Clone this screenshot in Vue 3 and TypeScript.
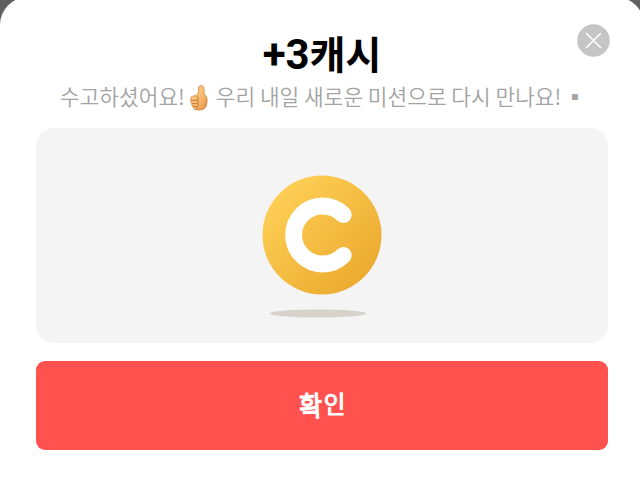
<template>
  <div class="screen">
    <section v-if="open" class="sheet">
      <button class="close" type="button" aria-label="닫기" @click="close">
        <svg viewBox="0 0 33 33">
          <circle cx="16.5" cy="16.5" r="16.3" fill="#c5c5c5" />
          <path d="M9.5 9.5 23.5 23.5M23.5 9.5 9.5 23.5" stroke="#fff" stroke-width="1.5" stroke-linecap="round" />
        </svg>
      </button>

      <h1 class="title"><span class="amount">+{{ reward }}</span>캐시</h1>

      <p class="message">
        <span>수고하셨어요!</span>
        <svg class="thumb" viewBox="0 0 18 26">
          <defs>
            <linearGradient id="skin" x1="0" y1="0" x2="1" y2="1">
              <stop offset="0" stop-color="#ffd590" />
              <stop offset=".6" stop-color="#f8b86b" />
              <stop offset="1" stop-color="#d98a43" />
            </linearGradient>
          </defs>
          <path
            d="M9.200 1.200C10.500.2 13.200.4 13.800 2.400c.6 2.200.1 4.800.5 7.200 1.900 1.100 2.800 2.800 2.800 5.300 0 3.500-.4 6.700-2.600 8.600-2.300 1.900-6.900 1.900-9.400.9-1.600-.6-2.300-1.700-2-3.100-1.200-.6-1.700-1.700-1.300-3C.7 17.500.3 16.200.9 15 .3 13.500.9 11.700 2.500 11.200c1.800-.6 3.500-.5 4.900-1.500C8.700 7.700 8.500 4.900 8.700 2.600c0-.6.100-1.100.5-1.400z"
            fill="url(#skin)"
            stroke="#c77d38"
            stroke-width=".7"
          />
          <path
            d="M1.300 15.100c2 .5 4 .3 6.200 0M2 18.300c1.900.5 3.700.4 5.500 0M3.300 21.300c1.500.5 2.800.4 4.100 0M6.300 11.500c2.200.2 2.900 2.600 1.200 3.600 1.400.6 1.400 2.500 0 3.200 1.100.7 1 2.400-.1 3 .7.8.3 2-.6 2.500"
            fill="none"
            stroke="#b9702f"
            stroke-width=".9"
            stroke-linecap="round"
          />
        </svg>
        <span>우리 내일 새로운 미션으로 다시 만나요!</span>
        <span class="mark">▪</span>
      </p>

      <div class="panel">
        <svg class="coin" viewBox="0 0 120 144">
          <defs>
            <linearGradient id="gold" x1=".1" y1=".1" x2=".9" y2=".9">
              <stop offset="0" stop-color="#ffd057" />
              <stop offset="1" stop-color="#eaa92d" />
            </linearGradient>
          </defs>
          <circle cx="60" cy="60" r="59.500" fill="url(#gold)" />
          <path d="M81.300 39.700A29 29 0 1 0 81.300 80.300" fill="none" stroke="#fff" stroke-width="16.800" stroke-linecap="round" />
          <ellipse cx="56" cy="138.500" rx="48.500" ry="4" fill="#d7d3ca" />
        </svg>
      </div>

      <button class="confirm" type="button" @click="close">
        <span class="first">확</span><span class="second">인</span>
      </button>
    </section>
  </div>
</template>

<script setup lang="ts">
import { ref } from "vue";

const reward = ref<number>(3);
const open = ref(true);

function close() {
	open.value = false;
}
</script>

<style>
body {
  margin: 0;
  overflow: hidden;
}
</style>

<style scoped>
.screen {
  height: 504px;
  overflow: hidden;
  background: #606060;
  font-family: "Noto Sans CJK KR", sans-serif;
}

.sheet {
  position: relative;
  box-sizing: border-box;
  display: flex;
  flex-direction: column;
  width: 644px;
  height: 540px;
  margin-top: -3px;
  padding: 30px 36px 0;
  border-radius: 28px;
  background: #fff;
}

.close {
  position: absolute;
  top: 27px;
  right: 34px;
  width: 33px;
  height: 33px;
  padding: 0;
  border: 0;
  background: none;
}

.close svg {
  display: block;
}

.title {
  margin: 0;
  height: 53px;
  color: #000;
  font-size: 39px;
  font-weight: 700;
  line-height: 50px;
  text-align: center;
}

.amount {
  font-family: Roboto, sans-serif;
  font-size: 42px;
  line-height: 1;
}

.message {
  display: flex;
  align-items: center;
  height: 32px;
  margin: 0 0 16px 24px;
  color: #a3a3a3;
  font-size: 21.4px;
  font-weight: 350;
  line-height: 32px;
  white-space: nowrap;
}

.thumb {
  width: 18px;
  height: 26px;
  margin: 3px 8px 0 5px;
}

.mark {
  margin-left: 3px;
}

.panel {
  display: flex;
  justify-content: center;
  height: 215px;
  border-radius: 18px;
  background: #f4f4f4;
}

.coin {
  width: 120px;
  height: 144px;
  margin-top: 47px;
}

.confirm {
  display: flex;
  align-items: center;
  justify-content: center;
  height: 89px;
  margin-top: 18px;
  padding: 0;
  border: 0;
  border-radius: 9px;
  background: #ff524f;
  color: #fff;
  font-family: inherit;
  font-size: 25px;
  font-weight: 350;
  -webkit-text-stroke: 1.3px #fff;
  stroke-linejoin: round;
}

.first {
  transform: translate(1px, -2px) rotate(-3deg) scaleY(1.12);
}

.second {
  margin-left: 1px;
  transform: translateY(-3px) scale(.94, .95);
}
</style>
